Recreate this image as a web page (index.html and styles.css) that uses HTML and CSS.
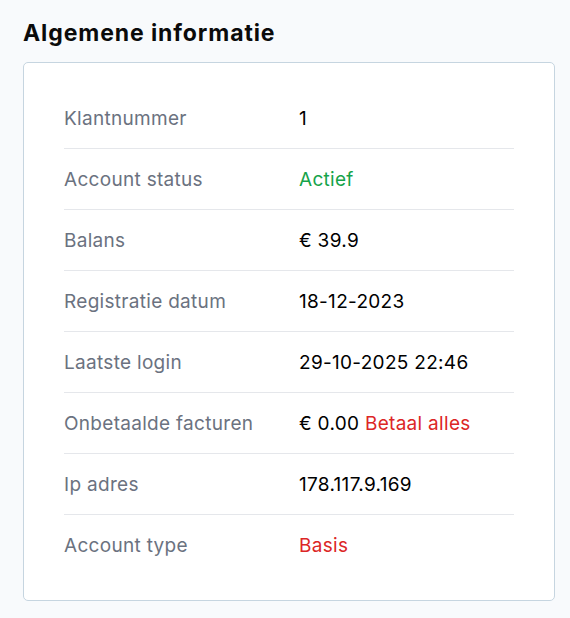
FILE: index.html
```html
<!DOCTYPE html>
<html lang="nl">
<head>
<meta charset="utf-8">
<link rel="stylesheet" href="styles.css">
</head>
<body>
<main class="section">
  <h2 class="title">Algemene informatie</h2>
  <div class="card">
    <div class="row"><div class="label">Klantnummer</div><div class="value">1</div></div>
    <div class="row"><div class="label">Account status</div><div class="value green">Actief</div></div>
    <div class="row"><div class="label">Balans</div><div class="value">€ 39.9</div></div>
    <div class="row"><div class="label">Registratie datum</div><div class="value">18-12-2023</div></div>
    <div class="row"><div class="label">Laatste login</div><div class="value">29-10-2025 22:46</div></div>
    <div class="row"><div class="label">Onbetaalde facturen</div><div class="value">€ 0.00 <a class="red link" href="#">Betaal alles</a></div></div>
    <div class="row"><div class="label">Ip adres</div><div class="value">178.117.9.169</div></div>
    <div class="row"><div class="label">Account type</div><div class="value red">Basis</div></div>
  </div>
</main>
</body>
</html>
```
FILE: styles.css
```css
* { box-sizing: border-box; }
html, body { margin: 0; padding: 0; background: #f8fafc; }
body { font-family: Inter, "Open Sans", sans-serif; color: #000; }
.section { padding: 19px 16px 0 23px; }
.title { margin: 0 0 15px; font-size: 23px; letter-spacing: 0.9px; font-weight: 700; line-height: 28px; color: #0b0b0b; }
.card {
  width: 532px;
  background: #fff;
  border: 1px solid #c6d5e0;
  border-radius: 5px;
  padding: 25px 40px 24px;
}
.row {
  display: grid;
  grid-template-columns: 235px 1fr;
  align-items: center;
  height: 61px;
  border-bottom: 1px solid #e5e7eb;
  font-size: 19px;
  letter-spacing: 0.3px;
}
.row:last-child { border-bottom: none; }
.label { color: #6b7280; }
.value { color: #000; }
.green { color: #16a34a; }
.red { color: #dc2626; }
.link { text-decoration: none; }
```
